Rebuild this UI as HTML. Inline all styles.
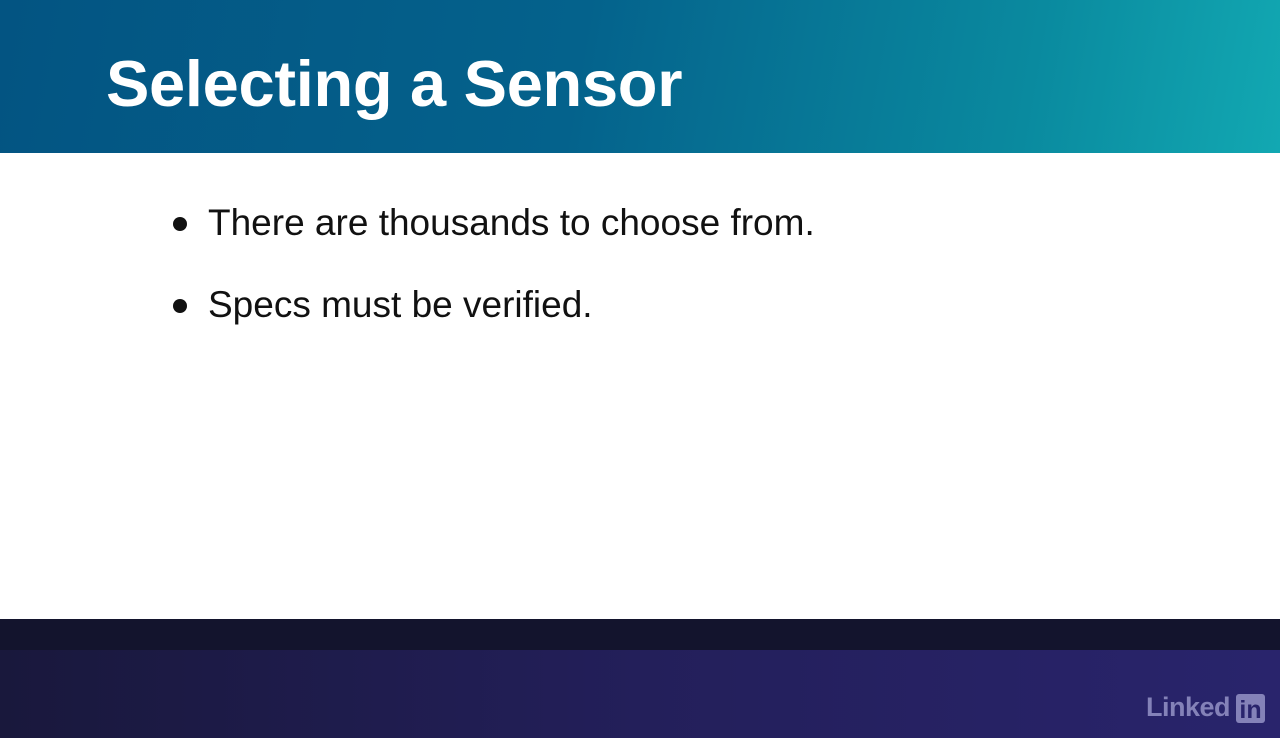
<!DOCTYPE html>
<html><head><style>
html,body{margin:0;padding:0;width:1280px;height:738px;overflow:hidden;background:#fff;font-family:"Liberation Sans",sans-serif}
.hd{position:absolute;left:0;top:0;width:1280px;height:153px;background:linear-gradient(100deg,#035482 0%,#04628c 45%,#0a8a9f 80%,#12a8b2 100%)}
.t{position:absolute;left:106px;top:46px;color:#fff;font-weight:bold;font-size:65px;white-space:nowrap;letter-spacing:-0.3px}
.b{position:absolute;left:208px;color:#111;font-size:37px;white-space:nowrap}
.dot{position:absolute;left:173px;width:14px;height:14px;border-radius:50%;background:#111}
.band{position:absolute;left:0;top:619px;width:1280px;height:31px;background:#13142d}
.ft{position:absolute;left:0;top:650px;width:1280px;height:88px;background:linear-gradient(90deg,#19183c 0%,#231f5a 50%,#29246c 100%)}
.li{position:absolute;left:1146px;top:692px;color:#8482b8;font-weight:bold;font-size:27px;letter-spacing:-0.5px}
.in{position:absolute;left:1236px;top:694px;width:29px;height:29px;background:#8482b8;border-radius:3px;color:#29246c;font-weight:bold;font-size:25px;line-height:33px;text-align:center}
</style></head><body>
<div class="hd"></div>
<div class="t">Selecting a Sensor</div>
<div class="dot" style="top:217px"></div>
<div class="b" style="top:202px">There are thousands to choose from.</div>
<div class="dot" style="top:299px"></div>
<div class="b" style="top:284px">Specs must be verified.</div>
<div class="band"></div>
<div class="ft"></div>
<div class="li">Linked</div>
<div class="in">in</div>
</body></html>
